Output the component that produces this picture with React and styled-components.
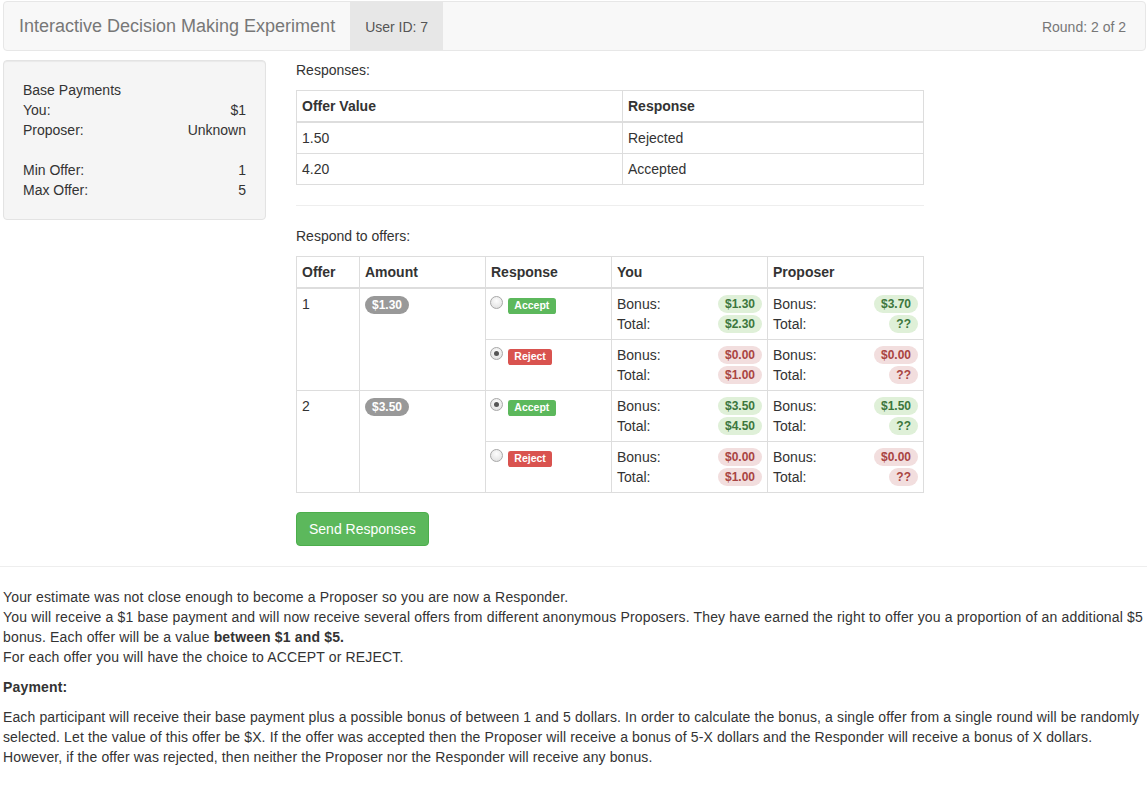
import React from "react";
import styled, { createGlobalStyle } from "styled-components";

const GlobalStyle = createGlobalStyle`
  html, body {
    margin: 0;
    padding: 0;
    background: #fff;
  }
  body {
    font-family: "Liberation Sans", Arial, Helvetica, sans-serif;
    font-size: 14px;
    line-height: 20px;
    color: #333;
  }
  * { box-sizing: border-box; }
`;

const Page = styled.div`
  padding: 1px 1px 0 3px;
`;

const Navbar = styled.div`
  display: flex;
  align-items: stretch;
  height: 50px;
  background: #f8f8f8;
  border: 1px solid #e7e7e7;
  border-radius: 4px;
`;

const Brand = styled.div`
  padding: 14px 15px 16px;
  font-size: 18px;
  line-height: 20px;
  color: #777;
`;

const NavItem = styled.div`
  padding: 15px;
  color: ${(p) => (p.$active ? "#555" : "#777")};
  background: ${(p) => (p.$active ? "#e7e7e7" : "transparent")};
  margin-left: ${(p) => (p.$right ? "auto" : "0")};
  padding-right: ${(p) => (p.$right ? "19px" : "15px")};
`;

const Row = styled.div`
  display: flex;
  align-items: flex-start;
  gap: 30px;
  margin-top: 9px;
`;

const Well = styled.div`
  width: 263px;
  flex: none;
  background: #f5f5f5;
  border: 1px solid #e3e3e3;
  border-radius: 4px;
  padding: 19px;
  box-shadow: inset 0 1px 1px rgba(0, 0, 0, 0.05);
`;

const InfoLine = styled.div`
  display: flex;
  justify-content: space-between;
  margin-top: ${(p) => (p.$gap ? "20px" : "0")};
`;

const Main = styled.div`
  width: 628px;
  flex: none;
`;

const Caption = styled.p`
  margin: 0 0 10px;
`;

const Table = styled.table`
  width: 100%;
  border-collapse: collapse;
  border-spacing: 0;
  margin-bottom: 20px;
  border: 1px solid #ddd;

  th, td {
    border: 1px solid #ddd;
    padding: 5px;
    text-align: left;
    vertical-align: top;
    line-height: 20px;
  }
  thead th {
    border-bottom-width: 2px;
    font-weight: bold;
  }
`;

const Rule = styled.hr`
  margin: 20px 0;
  border: 0;
  border-top: 1px solid #eee;
`;

const Pill = styled.span`
  display: inline-block;
  min-width: 10px;
  padding: 3px 7px;
  font-size: 12px;
  font-weight: bold;
  line-height: 1;
  white-space: nowrap;
  text-align: center;
  border-radius: 10px;
  background: ${(p) => (p.$tone === "good" ? "#dff0d8" : p.$tone === "bad" ? "#f2dede" : "#999")};
  color: ${(p) => (p.$tone === "good" ? "#3c763d" : p.$tone === "bad" ? "#a94442" : "#fff")};
`;

const Label = styled.span`
  display: inline-block;
  padding: 0.2em 0.6em 0.3em;
  font-size: 10.5px;
  font-weight: bold;
  line-height: 1;
  color: #fff;
  border-radius: 0.25em;
  background: ${(p) => (p.$kind === "accept" ? "#5cb85c" : "#d9534f")};
  margin-top: 4px;
`;

const Choice = styled.label`
  display: flex;
  align-items: flex-start;
  gap: 5px;
`;

const Radio = styled.input.attrs({ type: "radio" })`
  appearance: none;
  -webkit-appearance: none;
  flex: none;
  margin: 2px 0 0 -1px;
  width: 13px;
  height: 13px;
  border-radius: 50%;
  border: 1px solid #a9a9a9;
  background: radial-gradient(circle at 50% 35%, #fdfdfd 0%, #e6e6e6 70%, #d4d4d4 100%);
  display: grid;
  place-items: center;

  &:checked::after {
    content: "";
    width: 5px;
    height: 5px;
    border-radius: 50%;
    background: #555;
  }
`;

const Money = styled.div`
  display: flex;
  justify-content: space-between;
  align-items: center;
  height: 20px;
`;

const SendButton = styled.button`
  font-family: inherit;
  font-size: 14px;
  line-height: 20px;
  padding: 6px 12px;
  color: #fff;
  background: #5cb85c;
  border: 1px solid #4cae4c;
  border-radius: 4px;
  cursor: pointer;
  margin-top: -1px;
`;

const FullRule = styled.hr`
  margin: 20px 0;
  border: 0;
  border-top: 1px solid #eee;
`;

const Notes = styled.div`
  padding: 0 1px 0 3px;
`;

const Para = styled.p`
  margin: 0 0 10px;
  letter-spacing: ${(p) => (p.$tight ? "0.12px" : "0.16px")};
`;

const offers = [
  {
    id: 1,
    amount: "$1.30",
    rows: [
      { kind: "accept", checked: false, you: ["$1.30", "$2.30"], prop: ["$3.70", "??"], tone: "good" },
      { kind: "reject", checked: true, you: ["$0.00", "$1.00"], prop: ["$0.00", "??"], tone: "bad" },
    ],
  },
  {
    id: 2,
    amount: "$3.50",
    rows: [
      { kind: "accept", checked: true, you: ["$3.50", "$4.50"], prop: ["$1.50", "??"], tone: "good" },
      { kind: "reject", checked: false, you: ["$0.00", "$1.00"], prop: ["$0.00", "??"], tone: "bad" },
    ],
  },
];

const MoneyCell = ({ values, tone }) => (
  <td>
    <Money>
      <span>Bonus:</span>
      <Pill $tone={tone}>{values[0]}</Pill>
    </Money>
    <Money>
      <span>Total:</span>
      <Pill $tone={tone}>{values[1]}</Pill>
    </Money>
  </td>
);

export default function App() {
  return (
    <>
      <GlobalStyle />
      <Page>
        <Navbar>
          <Brand>Interactive Decision Making Experiment</Brand>
          <NavItem $active>User ID: 7</NavItem>
          <NavItem $right>Round: 2 of 2</NavItem>
        </Navbar>

        <Row>
          <Well>
            <div>Base Payments</div>
            <InfoLine><span>You:</span><span>$1</span></InfoLine>
            <InfoLine><span>Proposer:</span><span>Unknown</span></InfoLine>
            <InfoLine $gap><span>Min Offer:</span><span>1</span></InfoLine>
            <InfoLine><span>Max Offer:</span><span>5</span></InfoLine>
          </Well>

          <Main>
            <Caption>Responses:</Caption>
            <Table>
              <thead>
                <tr>
                  <th style={{ width: 326 }}>Offer Value</th>
                  <th>Response</th>
                </tr>
              </thead>
              <tbody>
                <tr><td>1.50</td><td>Rejected</td></tr>
                <tr><td>4.20</td><td>Accepted</td></tr>
              </tbody>
            </Table>

            <Rule />

            <Caption>Respond to offers:</Caption>
            <Table>
              <thead>
                <tr>
                  <th style={{ width: 63 }}>Offer</th>
                  <th style={{ width: 126 }}>Amount</th>
                  <th style={{ width: 126 }}>Response</th>
                  <th style={{ width: 156 }}>You</th>
                  <th>Proposer</th>
                </tr>
              </thead>
              <tbody>
                {offers.map((o) =>
                  o.rows.map((r, i) => (
                    <tr key={o.id + "-" + i}>
                      {i === 0 && <td rowSpan={2}>{o.id}</td>}
                      {i === 0 && (
                        <td rowSpan={2}>
                          <Pill>{o.amount}</Pill>
                        </td>
                      )}
                      <td>
                        <Choice>
                          <Radio name={"offer" + o.id} defaultChecked={r.checked} />
                          <Label $kind={r.kind}>{r.kind === "accept" ? "Accept" : "Reject"}</Label>
                        </Choice>
                      </td>
                      <MoneyCell values={r.you} tone={r.tone} />
                      <MoneyCell values={r.prop} tone={r.tone} />
                    </tr>
                  ))
                )}
              </tbody>
            </Table>

            <SendButton>Send Responses</SendButton>
          </Main>
        </Row>
      </Page>

      <FullRule />

      <Notes>
        <Para>
          Your estimate was not close enough to become a Proposer so you are now a Responder.
          <br />
          You will receive a $1 base payment and will now receive several offers from different anonymous Proposers. They have earned the right to offer you a proportion of an additional $5 bonus. Each offer will be a value <b>between $1 and $5.</b>
          <br />
          For each offer you will have the choice to ACCEPT or REJECT.
        </Para>
        <Para><b>Payment:</b></Para>
        <Para $tight>
          Each participant will receive their base payment plus a possible bonus of between 1 and 5 dollars. In order to calculate the bonus, a single offer from a single round will be randomly selected. Let the value of this offer be $X. If the offer was accepted then the Proposer will receive a bonus of 5-X dollars and the Responder will receive a bonus of X dollars. However, if the offer was rejected, then neither the Proposer nor the Responder will receive any bonus.
        </Para>
      </Notes>
    </>
  );
}
